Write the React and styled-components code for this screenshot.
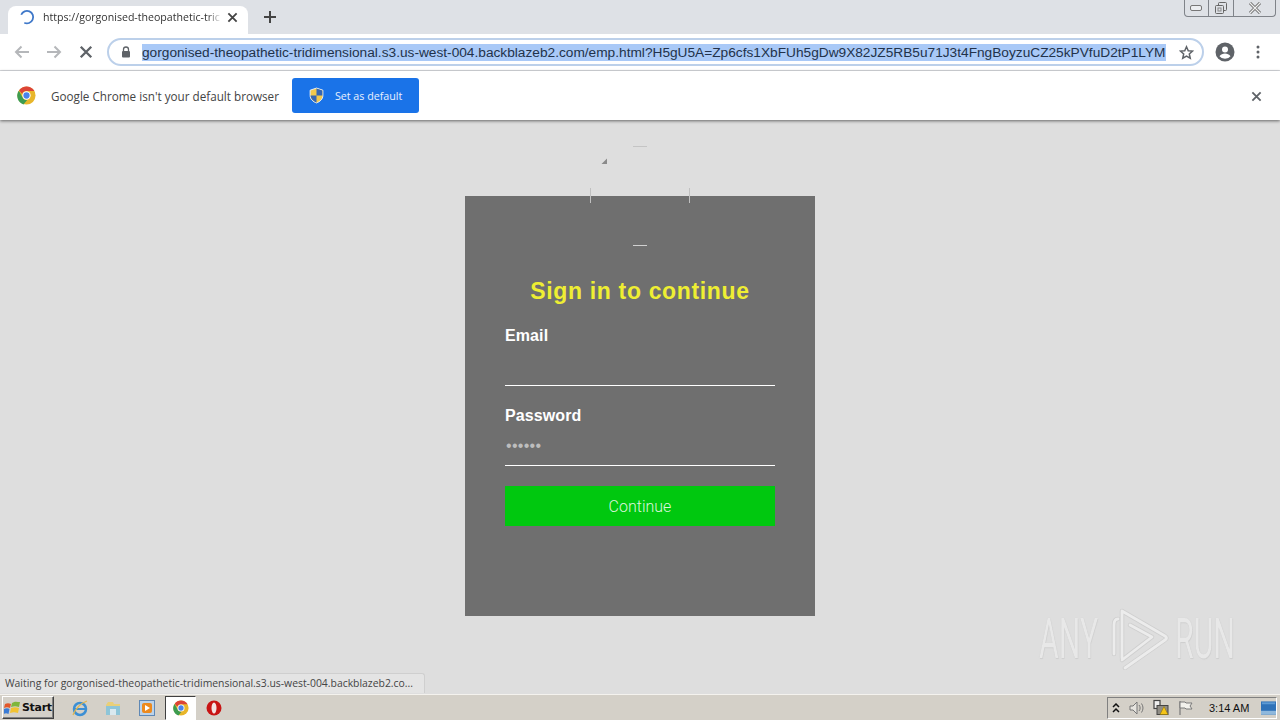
import React from "react";
import styled, { createGlobalStyle } from "styled-components";

const Global = createGlobalStyle`
  html, body { margin: 0; padding: 0; height: 720px; overflow: hidden; background: #dedede; }
  * { box-sizing: border-box; }
  #root { width: 1280px; height: 720px; }
`;
const Screen = styled.div`
  position: relative; width: 1280px; height: 720px; display: flex; flex-direction: column;
  font-family: "Liberation Sans", Arial, sans-serif; overflow: hidden;
`;
const TabStrip = styled.div`
  height: 34px; flex: none; background: #dee1e6; display: flex; align-items: flex-start; padding: 6px 0 0 8px; position: relative;
`;
const Tab = styled.div`
  width: 240px; height: 28px; background: #fff; border-radius: 8px 8px 0 0; display: flex; align-items: center; padding: 0 10px 6px 11px;
`;
const TabTitle = styled.div`
  flex: 1; min-width: 0; margin-left: 8px; font: 10.6px "Open Sans", sans-serif; color: #333; white-space: nowrap;
  -webkit-mask-image: linear-gradient(90deg, #000 92%, transparent);
  mask-image: linear-gradient(90deg, #000 92%, transparent);
`;
const IconSlot = styled.div`
  flex: none; display: flex; align-items: center; justify-content: center; width: ${p => p.$w || 16}px; height: ${p => p.$h || 16}px; margin: ${p => p.$m || 0};
`;
const NewTab = styled.div`
  width: 14px; height: 14px; margin: 4px 0 0 15px; display: flex;
`;
const WindowControls = styled.div`
  position: absolute; top: 0; right: 4px; width: 92px; height: 17px; display: flex; border: 1px solid #7f8389; border-top: 0; border-radius: 0 0 4px 4px; background: #dee1e6;
`;
const WinBtn = styled.div`
  width: ${p => p.$w}px; display: flex; align-items: center; justify-content: center; border-left: ${p => (p.$first ? "0" : "1px solid #7f8389")};
`;
const Toolbar = styled.div`
  height: 37px; flex: none; background: #fff; display: flex; align-items: center; padding: 0 0 0 14px; border-bottom: 1px solid #dadce0;
`;
const Omnibox = styled.div`
  width: 1097px; height: 28px; margin-left: 13px; border: 2px solid #bcd0ea; border-radius: 14px; display: flex; align-items: center; padding: 0 10px 0 11px; background: #fff;
`;
const UrlText = styled.div`
  margin-left: 10px; width: 1024px; height: 17px; background: #a9c9f7; color: #22324a; font: 13.69px/17px "Liberation Sans", sans-serif; white-space: nowrap; flex: none;
`;
const InfoBar = styled.div`
  height: 49px; flex: none; background: #fff; display: flex; align-items: center; padding: 0 16px 0 17px; box-shadow: 0 1px 3px rgba(0,0,0,.55); position: relative; z-index: 2;
`;
const InfoText = styled.div`
  margin-left: 15px; font: 11.7px "Open Sans", sans-serif; color: #444; white-space: nowrap;
`;
const DefaultButton = styled.div`
  margin-left: 13px; width: 127px; height: 35px; background: #1a73e8; color: #e8f0fe; border-radius: 3px; display: flex; align-items: center; padding-left: 16px; font: 10.7px "Open Sans", sans-serif; gap: 10px;
`;
const InfoClose = styled.div`
  margin-left: auto; display: flex; align-items: center; justify-content: center; width: 16px; height: 16px; margin-top: 1px;
`;
const Content = styled.div`
  flex: 1; background: #dedede; display: flex; justify-content: center; padding-top: 76px; position: relative;
`;
const Card = styled.div`
  position: relative; width: 350px; height: 420px; background: #6f6f6f; padding: 80px 40px 0;
`;
const LogoMarks = styled.svg`
  position: absolute; left: 125px; top: -50px; width: 100px; height: 100px; overflow: visible;
`;
const Title = styled.h1`
  margin: 0 0 20px; height: 30px; text-align: center; font: bold 23px/30px "Liberation Sans", sans-serif; color: #eeee33; letter-spacing: 0.65px;
`;
const Field = styled.div`
  height: 80px; display: flex; flex-direction: column;
`;
const Label = styled.div`
  font: bold 16px/20px "Liberation Sans", sans-serif; color: #fff; height: 20px; letter-spacing: .1px;
`;
const InputLine = styled.div`
  height: 40px; border-bottom: 1px solid #fff; color: #bdbdbd; font: 16px/40px "Liberation Sans", sans-serif; letter-spacing: 0.3px; display: flex; align-items: center; padding: 0 0 0 1px;
`;
const Continue = styled.div`
  height: 40px; background: #00c80f; color: #dcf5dc; display: flex; align-items: center; justify-content: center; font: 300 16px Roboto, sans-serif;
`;
const StatusBubble = styled.div`
  position: absolute; left: 0; bottom: 1px; width: 425px; height: 20px; background: #e4e4e4; border: 1px solid #cfcfcf; border-left: 0; border-bottom: 0; border-radius: 0 3px 0 0; font: 10.4px/18px "Open Sans", sans-serif; color: #444; padding-left: 5px; white-space: nowrap;
`;
const Watermark = styled.div`
  position: absolute; left: 1039px; top: 488px; width: 200px; height: 62px; display: flex; align-items: center; pointer-events: none;
`;
const WatermarkWord = styled.span`
  font: 400 56px/62px Roboto, sans-serif; color: #e8e8e8; transform: scaleX(.54); transform-origin: left center; width: ${p => p.$w}px; display: block; flex: none; text-shadow: 0 0 1px #c4c4c4, 1px 1px 1px #cfcfcf;
`;
const Taskbar = styled.div`
  height: 26px; flex: none; background: #d4d0c8; border-top: 1px solid #f4f2ee; display: flex; align-items: center; padding-left: 2px; position: relative;
`;
const StartBtn = styled.div`
  width: 52px; height: 23px; border: 1px solid; border-color: #fff #404040 #404040 #fff; box-shadow: inset -1px -1px 0 #808080; display: flex; align-items: center; padding-left: 1px; gap: 1px; font: bold 11px "DejaVu Sans", sans-serif; color: #111; letter-spacing: -.3px;
`;
const QuickIcon = styled.div`
  display: flex; align-items: center; justify-content: center; width: 18px; height: 18px; margin-left: ${p => p.$ml}px;
`;
const ActiveTask = styled.div`
  width: 31px; height: 24px; margin-left: 9px; background: #fff; border: 1px solid; border-color: #404040 #fff #fff #404040; display: flex; align-items: center; justify-content: center;
`;
const Tray = styled.div`
  margin-left: auto; margin-right: 3px; width: 170px; height: 22px; border: 1px solid; border-color: #808080 #fff #fff #808080; display: flex; align-items: center; padding-left: 3px;
`;
const Clock = styled.div`
  font: 11px "Liberation Sans", sans-serif; color: #111; margin-left: 16px; width: 41px; white-space: nowrap;
`;

const ChromeLogo = ({ s = 18 }) => (
  <svg width={s} height={s} viewBox="0 0 20 20">
    <circle cx="10" cy="10" r="9.5" fill="#e8b62b" />
    <path d="M10 .5a9.5 9.5 0 0 1 8.3 4.8H10a4.8 4.8 0 0 0-4.5 3L2.2 4.6A9.5 9.5 0 0 1 10 .5z" fill="#dc4437" />
    <path d="M1.9 5 6 12.3a4.8 4.8 0 0 0 4.7 2.4l-3.9 4.7A9.5 9.5 0 0 1 1.9 5z" fill="#3d9c50" />
    <circle cx="10" cy="10" r="4.4" fill="#fff" />
    <circle cx="10" cy="10" r="3.3" fill="#4a83ea" />
  </svg>
);
const CloseX = ({ s = 12, w = 2, c = "#5f6368" }) => (
  <svg width={s} height={s} viewBox="0 0 12 12"><path d="M1.5 1.5l9 9M10.5 1.5l-9 9" stroke={c} strokeWidth={w} fill="none" /></svg>
);

export default function App() {
  return (
    <Screen>
      <Global />
      <TabStrip>
        <Tab>
          <IconSlot>
            <svg width="18" height="18" viewBox="0 0 18 18"><path d="M2.5 6.5A7 7 0 1 1 6 15.5" stroke="#3f78c9" strokeWidth="2" fill="none" /></svg>
          </IconSlot>
          <TabTitle>https://gorgonised-theopathetic-tric</TabTitle>
          <IconSlot $w="12" $h="12" $m="0 0 0 4px"><CloseX s={11} c="#444" /></IconSlot>
        </Tab>
        <NewTab>
          <svg width="14" height="14" viewBox="0 0 14 14"><path d="M7 1v12M1 7h12" stroke="#444" strokeWidth="2" fill="none" /></svg>
        </NewTab>
        <WindowControls>
          <WinBtn $first $w="23">
            <svg width="13" height="7" viewBox="0 0 13 7"><rect x=".5" y=".5" width="11" height="5" rx="1.5" fill="#eceef1" stroke="#777" /></svg>
          </WinBtn>
          <WinBtn $w="25">
            <svg width="14" height="14" viewBox="0 0 14 14"><rect x="4.5" y="1.5" width="8" height="8" rx="1" fill="none" stroke="#666" /><rect x="1.5" y="4.5" width="8" height="8" rx="1" fill="#dee1e6" stroke="#666" /><rect x="4" y="7" width="3" height="3" fill="none" stroke="#888" /></svg>
          </WinBtn>
          <WinBtn $w="42">
            <svg width="14" height="12" viewBox="0 0 14 12"><path d="M2 1l10 10M12 1L2 11" stroke="#6a6a6a" strokeWidth="3" fill="none" /><path d="M2 1l10 10M12 1L2 11" stroke="#f0f0f0" strokeWidth="1.2" fill="none" /></svg>
          </WinBtn>
        </WindowControls>
      </TabStrip>
      <Toolbar>
        <IconSlot>
          <svg width="16" height="14" viewBox="0 0 16 14"><path d="M15 7H2M7.5 1.5 2 7l5.5 5.5" stroke="#b5b7ba" strokeWidth="2" fill="none" /></svg>
        </IconSlot>
        <IconSlot $m="0 0 0 16px">
          <svg width="16" height="14" viewBox="0 0 16 14"><path d="M1 7h13M8.5 1.5 14 7l-5.5 5.5" stroke="#b5b7ba" strokeWidth="2" fill="none" /></svg>
        </IconSlot>
        <IconSlot $m="0 0 0 16px"><CloseX s={14} c="#5f6368" /></IconSlot>
        <Omnibox>
          <IconSlot $w="12" $h="14">
            <svg width="10" height="12" viewBox="0 0 10 12"><path d="M2.5 5V3.5a2.5 2.5 0 0 1 5 0V5" stroke="#5f6368" strokeWidth="1.3" fill="none" /><rect x="1" y="5" width="8" height="6.5" rx="1" fill="#5f6368" /></svg>
          </IconSlot>
          <UrlText>gorgonised-theopathetic-tridimensional.s3.us-west-004.backblazeb2.com/emp.html?H5gU5A=Zp6cfs1XbFUh5gDw9X82JZ5RB5u71J3t4FngBoyzuCZ25kPVfuD2tP1LYM</UrlText>
          <IconSlot $m="0 0 0 12px">
            <svg width="15" height="15" viewBox="0 0 24 24"><path d="M12 2.8l2.8 6.3 6.9.7-5.2 4.6 1.5 6.8-6-3.5-6 3.5 1.5-6.8-5.2-4.6 6.9-.7z" fill="none" stroke="#5f6368" strokeWidth="2.4" /></svg>
          </IconSlot>
        </Omnibox>
        <IconSlot $w="20" $h="20" $m="0 0 0 11px">
          <svg width="20" height="20" viewBox="0 0 20 20"><circle cx="10" cy="10" r="9.5" fill="#5f6368" /><circle cx="10" cy="7.5" r="3" fill="#fff" /><path d="M4.5 14.2c1.2-2 3.4-2.8 5.5-2.8s4.3.8 5.5 2.8a7 7 0 0 1-11 0z" fill="#fff" /></svg>
        </IconSlot>
        <IconSlot $w="4" $h="16" $m="0 0 0 21px">
          <svg width="4" height="14" viewBox="0 0 4 14"><circle cx="2" cy="2" r="1.5" fill="#5f6368" /><circle cx="2" cy="7" r="1.5" fill="#5f6368" /><circle cx="2" cy="12" r="1.5" fill="#5f6368" /></svg>
        </IconSlot>
      </Toolbar>
      <InfoBar>
        <ChromeLogo s={19} />
        <InfoText>Google Chrome isn't your default browser</InfoText>
        <DefaultButton>
          <svg width="17" height="17" viewBox="0 0 16 16"><path d="M8 1l6 2v5c0 3.5-2.8 5.8-6 7-3.2-1.2-6-3.5-6-7V3z" fill="#f2c94c" stroke="#eaf0f8" strokeWidth=".9" /><path d="M8 1.500l5.500 1.800V8H8zM8 8v6.500C5 13.300 2.500 11.200 2.500 8z" fill="#3566b4" /></svg>
          Set as default
        </DefaultButton>
        <InfoClose><CloseX s={11} c="#5f6368" /></InfoClose>
      </InfoBar>
      <Content>
        <Card>
          <LogoMarks viewBox="0 0 100 100">
            <path d="M43 .5h14" stroke="#c4c4c4" fill="none" />
            <path d="M43 99.5h14" stroke="#d0d0d0" fill="none" />
            <path d="M.5 42v15M99.5 42v15" stroke="#c0c0c0" fill="none" />
            <path d="M17 12.500v5.500h-5.500z" fill="#8a8a8a" />
          </LogoMarks>
          <Title>Sign in to continue</Title>
          <Field>
            <Label>Email</Label>
            <InputLine />
          </Field>
          <Field>
            <Label>Password</Label>
            <InputLine>••••••</InputLine>
          </Field>
          <Continue>Continue</Continue>
        </Card>
        <StatusBubble>Waiting for gorgonised-theopathetic-tridimensional.s3.us-west-004.backblazeb2.co...</StatusBubble>
        <Watermark>
          <WatermarkWord $w="72">ANY</WatermarkWord>
          <IconSlot $w="64" $h="62">
            <svg width="64" height="62" viewBox="0 0 64 62">
              <g fill="none" stroke="#cfcfcf" strokeWidth="4.5" strokeLinejoin="round" strokeLinecap="round">
                <path d="M7 11Q3 11 3 17V46" />
                <path d="M11 50V3L54 28Q57 30 54 32L14 60" />
                <path d="M19 17L41 29L11 52" />
              </g>
              <g fill="none" stroke="#ececec" strokeWidth="2.8" strokeLinejoin="round" strokeLinecap="round">
                <path d="M7 11Q3 11 3 17V46" />
                <path d="M11 50V3L54 28Q57 30 54 32L14 60" />
                <path d="M19 17L41 29L11 52" />
              </g>
            </svg>
          </IconSlot>
          <WatermarkWord $w="60">RUN</WatermarkWord>
        </Watermark>
      </Content>
      <Taskbar>
        <StartBtn>
          <svg width="17" height="16" viewBox="0 0 17 16"><path d="M1 4c2-1 4-1 6 0l-1 4c-2-1-4-1-6 0z" fill="#e2582b" /><path d="M8 3c3-2 5-1 8-1l-1 5c-3-1-5-1-8 0z" fill="#7fb63b" /><path d="M0 9c2-1 4-1 5.5 0l-1 5c-2-1-3-1-5 0z" fill="#3a7bd5" /><path d="M7 8c3-1 5-1 8 0l-1 5c-3-1-5-1-8 0z" fill="#f2c230" /></svg>
          Start
        </StartBtn>
        <QuickIcon $ml="17">
          <svg width="18" height="18" viewBox="0 0 18 18"><circle cx="9" cy="10" r="6" fill="none" stroke="#3c8fd4" strokeWidth="2.5" /><path d="M4 10h10" stroke="#3c8fd4" strokeWidth="2" /><path d="M2 16c2-6 8-12 14-14" stroke="#e2b64a" strokeWidth="1.2" fill="none" /></svg>
        </QuickIcon>
        <QuickIcon $ml="15">
          <svg width="16" height="16" viewBox="0 0 16 16"><path d="M1 5l2-3h5l1 2h6v2H1z" fill="#e9cf78" /><rect x="1" y="6" width="14" height="9" fill="#8ec5d8" /><rect x="5" y="9" width="6" height="6" fill="#d9e9ef" /></svg>
        </QuickIcon>
        <QuickIcon $ml="16">
          <svg width="16" height="16" viewBox="0 0 16 16"><rect x=".5" y=".5" width="15" height="15" fill="#bcd3ea" stroke="#5f88b5" /><rect x="3" y="3" width="10" height="10" rx="2" fill="#ed8a1d" /><path d="M6 5l5 3-5 3z" fill="#fff" /></svg>
        </QuickIcon>
        <ActiveTask><ChromeLogo s={16} /></ActiveTask>
        <QuickIcon $ml="9">
          <svg width="16" height="16" viewBox="0 0 16 16"><circle cx="8" cy="8" r="7.5" fill="#c81414" /><ellipse cx="8" cy="8" rx="2.5" ry="5.5" fill="#f3e3e3" /></svg>
        </QuickIcon>
        <Tray>
          <IconSlot $w="10" $h="14">
            <svg width="8" height="10" viewBox="0 0 8 10"><path d="M1 4l3-3 3 3M1 9l3-3 3 3" stroke="#111" strokeWidth="1.5" fill="none" /></svg>
          </IconSlot>
          <IconSlot $m="0 0 0 8px">
            <svg width="16" height="16" viewBox="0 0 16 16"><path d="M1 6h3l4-4v12l-4-4H1z" fill="#e6e4df" stroke="#777" /><path d="M10 5c1.5 2 1.5 4 0 6M12.5 3.5c2 3 2 6 0 9" stroke="#777" fill="none" /></svg>
          </IconSlot>
          <IconSlot $m="0 0 0 8px">
            <svg width="17" height="17" viewBox="0 0 16 16"><rect x="1" y="1" width="6" height="8" fill="#eee" stroke="#444" strokeWidth="1.2" /><rect x="4" y="6" width="11" height="9" fill="#8f8c85" stroke="#444" /><path d="M11 7l4 8H7z" fill="#f5c518" stroke="#8b6d00" strokeWidth=".5" /></svg>
          </IconSlot>
          <IconSlot $m="0 0 0 8px">
            <svg width="16" height="16" viewBox="0 0 16 16"><path d="M3 1v14" stroke="#777" strokeWidth="1.2" /><path d="M3 2h5l1 1h6l-2 3 2 3H9l-1-1H3z" fill="#f2f1ec" stroke="#7a7a7a" /></svg>
          </IconSlot>
          <Clock>3:14 AM</Clock>
          <IconSlot $w="15" $m="0 0 0 11px">
            <svg width="15" height="14" viewBox="0 0 16 14"><rect width="16" height="14" fill="#2f72b8" /><rect y="10" width="16" height="4" fill="#8fb8dc" /><rect x="1" y="1" width="14" height="2" fill="#5e9bd4" /></svg>
          </IconSlot>
        </Tray>
      </Taskbar>
    </Screen>
  );
}
